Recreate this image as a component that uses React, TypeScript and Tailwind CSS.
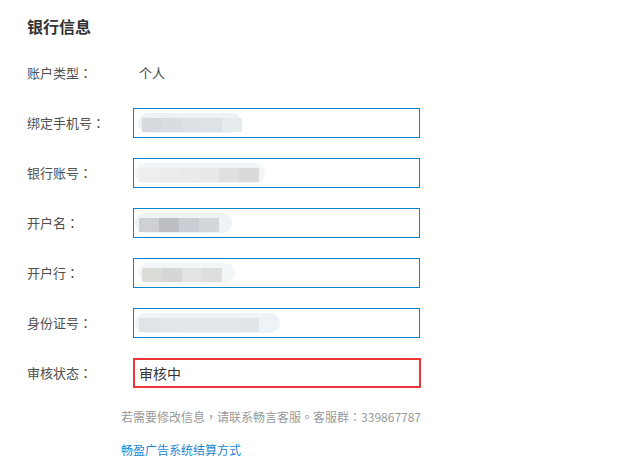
import React from 'react';

type Blob = {
  pill: string;
  blocks: string[];
  offset: string;
};

const rows: { label: string; blob: Blob }[] = [
  {
    label: '绑定手机号',
    blob: {
      pill: 'w-[104px] bg-[#edf2f5]',
      offset: 'ml-[4px]',
      blocks: ['#d6dade', '#d9dde1', '#dde1e5', '#dde2e6', '#e6ebee'],
    },
  },
  {
    label: '银行账号',
    blob: {
      pill: 'w-[130px] bg-[#f1f5f7]',
      offset: 'ml-[1px]',
      blocks: ['#eeeeee', '#ececec', '#eaeaea', '#e9e9e9', '#e0e0e0', '#dadada'],
    },
  },
  {
    label: '开户名',
    blob: {
      pill: 'w-[97px] bg-[#eef3f6]',
      offset: 'ml-[1px]',
      blocks: ['#ced0d4', '#bcbec3', '#caced4', '#d3d6da'],
    },
  },
  {
    label: '开户行',
    blob: {
      pill: 'w-[97px] bg-[#f3f6f7]',
      offset: 'ml-[4px]',
      blocks: ['#dcdcd8', '#d6d6d6', '#e3e3e3', '#dedede'],
    },
  },
  {
    label: '身份证号',
    blob: {
      pill: 'w-[145px] bg-[#edf3f6]',
      offset: 'ml-[1px]',
      blocks: ['#e0e4e7', '#e2e6e9', '#e3e7ea', '#e4e8eb', '#e3e7ea', '#e1e5e8'],
    },
  },
];

// centred full-width punctuation, as the reference font draws it
function P({ c }: { c: string }) {
  return <span className="font-['Noto_Sans_CJK_TC']">{c}</span>;
}

function Label({ text }: { text: string }) {
  return (
    <span className="w-[106px]">
      {text}
      <P c="：" />
    </span>
  );
}

function Blurred({ blob }: { blob: Blob }) {
  return (
    <div className={`${blob.offset} ${blob.pill} h-[20px] rounded-full flex items-end pl-[4px] pb-[1px]`}>
      {blob.blocks.map((c, i) => (
        <div key={i} className="w-[20px] h-[14px]" style={{ backgroundColor: c }} />
      ))}
    </div>
  );
}

export default function App() {
  return (
    <div
      className="w-[637px] h-[466px] bg-white pl-[27px] pt-[14px] text-[13px] text-[#505050]"
      style={{ fontFamily: '"Noto Sans CJK SC", "Noto Sans", sans-serif' }}
    >
      <h2 className="h-6 leading-6 text-[16px] font-bold text-[#333]">银行信息</h2>

      <div className="mt-5 flex flex-col gap-5">
        <div className="flex h-[30px] items-center">
          <Label text="账户类型" />
          <span className="pl-[6px] text-[#444]">个人</span>
        </div>

        {rows.map((r) => (
          <div key={r.label} className="flex h-[30px] items-center">
            <Label text={r.label} />
            <div className="w-[287px] h-[30px] border border-[#0b82cf] flex items-center">
              <Blurred blob={r.blob} />
            </div>
          </div>
        ))}

        <div className="flex h-[30px] items-center">
          <Label text="审核状态" />
          <div className="w-[288px] h-[30px] border-2 border-[#ee3636] flex items-center pl-[4px] text-[14px] text-[#333]">
            审核中
          </div>
        </div>
      </div>

      <p className="mt-5 ml-[94px] text-[12px] leading-[18px] text-[#999]">
        若需要修改信息<P c="，" />请联系畅言客服<P c="。" />客服群<P c="：" />339867787
      </p>
      <a className="block mt-[15px] ml-[94px] text-[12px] leading-[18px] text-[#1787d3]" href="#">
        畅盈广告系统结算方式
      </a>
    </div>
  );
}
